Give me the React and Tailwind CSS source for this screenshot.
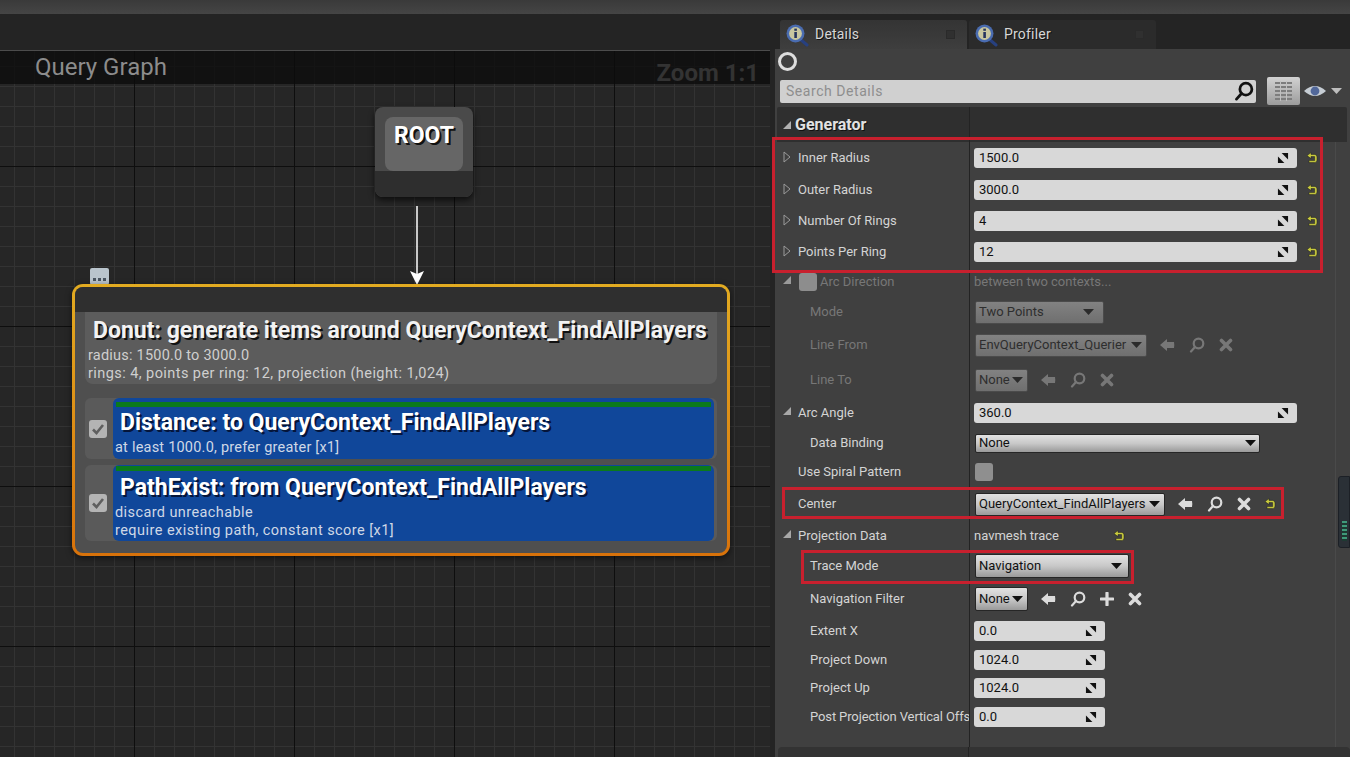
import React from 'react'

const Reset = ({ className = '' }) => (
  <svg width="12" height="13" viewBox="0 0 12 13" className={className}>
    <path d="M1 3.6 L5 0.6 V2.4 H8.5 Q11 2.4 11 5 V8 Q11 10.6 8.5 10.6 H3 V8.6 H8.6 V4.6 H5 V6.6 Z" fill="#c9cb3e" stroke="#1c1c1c" strokeWidth="0.5" />
  </svg>
)

const Spin = () => (
  <svg width="12" height="12" viewBox="0 0 13 13">
    <polygon points="5,1 12,1 12,8" fill="#111" />
    <polygon points="1,5 8,12 1,12" fill="#111" />
  </svg>
)

const ArrowLeft = ({ color }) => (
  <svg width="16" height="14" viewBox="0 0 16 14">
    <path d="M1 7 L8 1 V4 H15 Q15.6 7 15 10 H8 V13 Z" fill={color} />
  </svg>
)

const Lens = ({ color, size = 16, width = 2.2 }) => (
  <svg width={size} height={size} viewBox="0 0 16 16">
    <circle cx="9.5" cy="6.5" r="4.8" fill="none" stroke={color} strokeWidth={width} />
    <line x1="6" y1="10" x2="2" y2="14.5" stroke={color} strokeWidth={width} strokeLinecap="round" />
  </svg>
)

const Cross = ({ color }) => (
  <svg width="14" height="14" viewBox="0 0 14 14">
    <path d="M2.5 2.5 L11.5 11.5 M11.5 2.5 L2.5 11.5" stroke={color} strokeWidth="3.6" strokeLinecap="round" />
  </svg>
)

const Plus = ({ color }) => (
  <svg width="14" height="14" viewBox="0 0 14 14">
    <path d="M7 1 V13 M1 7 H13" stroke={color} strokeWidth="3.2" strokeLinecap="round" />
  </svg>
)

const TabIcon = () => (
  <svg width="24" height="24" viewBox="0 0 24 24">
    <line x1="15" y1="16" x2="22" y2="22" stroke="#27407f" strokeWidth="3" strokeLinecap="round" />
    <circle cx="10.5" cy="10.5" r="9" fill="#4a6cb0" />
    <circle cx="10.5" cy="10.5" r="6.4" fill="#c9c7a0" />
    <rect x="9.3" y="9" width="2.6" height="6" fill="#26345f" />
    <rect x="9.3" y="5.6" width="2.6" height="2.2" fill="#26345f" />
  </svg>
)

const Collapsed = () => (
  <svg width="8" height="12" viewBox="0 0 8 12">
    <path d="M1 1 L7 6 L1 11 Z" fill="none" stroke="#9a9a9a" strokeWidth="1" />
  </svg>
)

const Expanded = ({ color = '#a8a8a8' }) => (
  <svg width="10" height="10" viewBox="0 0 10 10">
    <polygon points="9,1 9,9 1,9" fill={color} />
  </svg>
)

const Check = () => (
  <div className="w-[18px] h-[18px] rounded-[3px] bg-[#b4b4b4] flex items-center justify-center shrink-0">
    <svg width="14" height="12" viewBox="0 0 14 12">
      <path d="M2 6.5 L5.5 10 L12 2" fill="none" stroke="#5f5f5f" strokeWidth="2.6" />
    </svg>
  </div>
)

const Caret = ({ color = '#111' }) => (
  <svg width="11" height="6" viewBox="0 0 11 6" className="shrink-0">
    <polygon points="0,0 11,0 5.5,6" fill={color} />
  </svg>
)

function NumberField({ value, wide }) {
  return (
    <div className={`${wide ? 'w-[323px]' : 'w-[131px]'} h-[20px] rounded-[3px] bg-[#d8d8d8] flex items-center justify-between pl-[5px] pr-[8px] text-[13px] text-[#111]`}>
      <span>{value}</span>
      <Spin />
    </div>
  )
}

function Dropdown({ label, className = '', dim }) {
  const tone = dim
    ? 'from-[#828282] to-[#6f6f6f] text-[#2e2e2e] border-[#4b4b4b]'
    : 'from-[#e2e2e2] via-[#c8c8c8] to-[#9a9a9a] text-[#111] border-[#262626]'
  return (
    <div className={`${className} bg-linear-to-b ${tone} border rounded-[2px] flex items-center justify-between pl-[3px] pr-[4px] text-[13px] whitespace-nowrap`}>
      <span>{label}</span>
      <Caret color={dim ? '#2b2b2b' : '#111'} />
    </div>
  )
}

function Row({ h, indent, arrow, label, dim, children }) {
  return (
    <div className={`${h} flex items-center`}>
      <div className={`w-[195px] h-full shrink-0 border-r border-[#232323] flex items-center overflow-hidden whitespace-nowrap text-[13px] ${dim ? 'text-[#777777]' : 'text-[#d4d4d4]'} ${indent ? 'pl-[35px]' : 'pl-[23px]'} relative`}>
        {arrow === 'closed' && <span className="absolute left-[8px] top-[calc(50%-7px)]"><Collapsed /></span>}
        {arrow === 'open' && <span className="absolute left-[7px] top-[calc(50%-7px)]"><Expanded /></span>}
        {label}
      </div>
      <div className="pl-[4px] flex items-center flex-1 min-w-0">{children}</div>
    </div>
  )
}

const Tab = ({ name, active }) => (
  <div className={`w-[187px] h-[29px] rounded-t-[3px] flex items-center pl-[5px] pr-[12px] ${active ? 'bg-linear-to-b from-[#343434] to-[#3e3e3e]' : 'bg-[#2b2b2b]'}`}>
    <TabIcon />
    <span className="ml-[6px] text-[14px] text-[#d6d6d6] [text-shadow:1px_1px_0_#111] tracking-[0.2px] flex-1">{name}</span>
    <span className="w-[9px] h-[9px] bg-[#303030] border border-[#2a2a2a]" />
  </div>
)

const Tools = ({ color, plus, className = '' }) => (
  <div className={`flex items-center gap-[14px] ${className}`}>
    <ArrowLeft color={color} />
    <Lens color={color} />
    {plus && <Plus color={color} />}
    <Cross color={color} />
  </div>
)

function TestBlock({ title, lines, className, top, gap, titleBox }) {
  return (
    <div className={`${className} flex items-center rounded-[6px] bg-[#5a5a5a]`}>
      <div className="w-[28px] flex justify-center pr-[2px] shrink-0">
        <Check />
      </div>
      <div className={`flex-1 h-full rounded-[6px] bg-[#10479a] ${top} px-[3px] mr-[3px] overflow-hidden`}>
        <div className="h-[5px] bg-[#0b7a1c]" />
        <div className={`pl-[4px] text-[23px] ${titleBox} font-bold text-white [text-shadow:2px_2px_0_#05153a] whitespace-nowrap`}>{title}</div>
        <div className={`text-[14.5px] leading-[18px] ${gap} -ml-[1px] text-[#cfd8e6]`}>
          {lines.map(l => <div key={l.text} className={l.track}>{l.text}</div>)}
        </div>
      </div>
    </div>
  )
}

function Graph() {
  return (
    <div className="relative w-[770px] border-t border-[#4c4c4c] bg-[#262626] bg-[linear-gradient(to_right,#0e0e0e_1px,transparent_1px),linear-gradient(to_bottom,#0e0e0e_1px,transparent_1px),linear-gradient(to_right,#333333_1px,transparent_1px),linear-gradient(to_bottom,#333333_1px,transparent_1px)] bg-[size:160px_160px,160px_160px,20px_20px,20px_20px] bg-[position:134px_0,0_115px,14px_0,0_15px]">
      <div className="h-[33px] bg-[#0c0c0c]/80 flex items-start justify-between pl-[35px] pr-[11px]">
        <span className="text-[24px] leading-[32px] text-[#8c8c8c]">Query Graph</span>
        <span className="text-[24px] leading-[44px] h-[33px] font-bold text-[#333333]">Zoom 1:1</span>
      </div>

      <div className="absolute left-[375px] top-[56px] w-[98px] h-[90px] rounded-[8px] bg-[#4a4a4a] shadow-[0_3px_6px_#000a] overflow-hidden">
        <div className="mx-[10px] mt-[10px] h-[54px] rounded-[8px] bg-[#666666] text-center text-[23px] leading-[38px] font-bold text-white [text-shadow:2px_2px_0_#111]">ROOT</div>
        <div className="h-[26px] bg-[#2e2e2e]" />
      </div>

      <svg width="16" height="80" viewBox="0 0 16 80" className="absolute left-[409px] top-[155px]">
        <line x1="8" y1="0" x2="8" y2="70" stroke="#ffffff" strokeWidth="1.5" />
        <polygon points="1,65 8,68 15,65 8,79" fill="#ffffff" />
      </svg>

      <div className="absolute left-[90px] top-[217px] w-[19px] h-[17px] rounded-[2px] bg-[#b9c4cc] flex items-end justify-center gap-[2px] pb-[4px]">
        <span className="w-[3px] h-[3px] bg-[#4a5560]" />
        <span className="w-[3px] h-[3px] bg-[#4a5560]" />
        <span className="w-[3px] h-[3px] bg-[#4a5560]" />
      </div>

      <div className="absolute left-[72px] top-[233px] w-[658px] h-[272px] rounded-[11px] bg-linear-to-b from-[#e2ab21] to-[#d8720a] p-[3px] shadow-[0_2px_6px_#0008]">
        <div className="h-full rounded-[8px] bg-[#4f4f4f] overflow-hidden">
          <div className="h-[25px] bg-[#2f2f2f]" />
          <div className="mx-[10px] h-[72px] rounded-b-[8px] bg-[#5c5c5c] px-[3px]">
            <div className="pl-[5px] h-[35px] text-[23px] leading-[38px] font-bold text-[#f2f2f2] [text-shadow:2px_2px_0_#111] whitespace-nowrap">Donut: generate items around QueryContext_FindAllPlayers</div>
            <div className="text-[14.5px] leading-[18px] text-[#cfcfcf] tracking-[0.22px]">radius: 1500.0 to 3000.0</div>
            <div className="text-[14.5px] leading-[18px] text-[#cfcfcf] tracking-[0.43px]">rings: 4, points per ring: 12, projection (height: 1,024)</div>
          </div>
          <div className="mx-[10px] mt-[14px] flex flex-col gap-[6px]">
            <TestBlock className="h-[61px]" top="pt-[4px]" gap="mt-0" titleBox="leading-[32px]" title="Distance: to QueryContext_FindAllPlayers" lines={[{ text: 'at least 1000.0, prefer greater [x1]', track: 'tracking-[0.22px]' }]} />
            <TestBlock className="h-[76px]" top="pt-[1px]" gap="mt-[1px]" titleBox="h-[32px] leading-[34px]" title="PathExist: from QueryContext_FindAllPlayers" lines={[{ text: 'discard unreachable', track: 'tracking-[0.4px]' }, { text: 'require existing path, constant score [x1]', track: 'tracking-[0.45px]' }]} />
          </div>
        </div>
      </div>
    </div>
  )
}

function Details() {
  const dimIcon = '#777777'
  const onIcon = '#dcdcdc'
  return (
    <div className="flex-1 flex flex-col min-w-0">
      <div className="h-[35px] flex items-end gap-[2px] pl-[5px]">
        <Tab name="Details" active />
        <Tab name="Profiler" />
      </div>
      <div className="flex-1 bg-[#404040] flex flex-col relative">
        <div className="h-[24px] pl-[3px] flex items-center">
          <span className="w-[19px] h-[19px] rounded-full border-[3px] border-[#dedede]" />
        </div>
        <div className="h-[34px] flex items-center pl-[5px] pr-[3px] pt-[2px]">
          <div className="w-[476px] h-[23px] rounded-[2px] bg-[#d0d0d0] flex items-center justify-between pl-[6px] pr-[2px] text-[14px] text-[#8e8e8e] tracking-[0.55px]">
            Search Details
            <Lens color="#111111" size={20} width={2.2} />
          </div>
          <div className="ml-[11px] w-[33px] h-[28px] rounded-[2px] bg-linear-to-b from-[#d2d2d2] to-[#9c9c9c] flex items-center justify-center">
            <svg width="17" height="20" viewBox="0 0 17 20">
              <path d="M0 2 H17 M0 6 H17 M0 10 H17 M0 14 H17 M0 18 H17" stroke="#7d7d7d" strokeWidth="2.2" />
              <path d="M5.5 0 V20 M11.5 0 V20" stroke="#c0c0c0" strokeWidth="1" />
            </svg>
          </div>
          <svg width="24" height="14" viewBox="0 0 24 14" className="ml-[3px]">
            <path d="M1 7 Q12 -3 23 7 Q12 17 1 7 Z" fill="#c6cdd4" />
            <circle cx="12" cy="7" r="4.4" fill="#52689a" />
          </svg>
          <span className="ml-[4px]"><Caret color="#bdbdbd" /></span>
        </div>

        <div className="h-[35px] bg-[#2f2f2f] ml-[2px] mr-[3px] flex items-center rounded-t-[2px]">
          <div className="w-[193px] h-full border-r border-[#232323] flex items-center pl-[5px] text-[16px] font-bold text-[#e2e2e2] [text-shadow:1px_1px_0_#111]">
            <Expanded color="#b0b0b0" />
            <span className="ml-[3px]">Generator</span>
          </div>
        </div>

        <div className="relative flex-1 mr-[14px] border-r border-[#4a4a4a]">
          <Row h="h-[32px]" arrow="closed" label="Inner Radius"><NumberField wide value="1500.0" /><Reset className="ml-[9px]" /></Row>
          <Row h="h-[32px]" arrow="closed" label="Outer Radius"><NumberField wide value="3000.0" /><Reset className="ml-[9px]" /></Row>
          <Row h="h-[30px]" arrow="closed" label="Number Of Rings"><NumberField wide value="4" /><Reset className="ml-[9px]" /></Row>
          <Row h="h-[32px]" arrow="closed" label="Points Per Ring"><NumberField wide value="12" /><Reset className="ml-[9px]" /></Row>
          <Row h="h-[28px]" dim label={
            <span className="flex items-center ml-[1px]">
              <span className="absolute left-[7px] top-[calc(50%-7px)]"><Expanded color="#9a9a9a" /></span>
              <span className="w-[18px] h-[18px] rounded-[3px] bg-[#8d8d8d] mr-[3px]" />
              Arc Direction
            </span>
          }>
            <span className="text-[13px] text-[#777777]">between two contexts...</span>
          </Row>
          <Row h="h-[32px]" dim indent label="Mode"><Dropdown dim label="Two Points" className="w-[129px] h-[23px] ml-[1px] !pr-[9px]" /></Row>
          <Row h="h-[34px]" dim indent label="Line From">
            <Dropdown dim label="EnvQueryContext_Querier" className="w-[172px] h-[23px] ml-[1px]" />
            <Tools color={dimIcon} className="ml-[12px]" />
          </Row>
          <Row h="h-[36px]" dim indent label="Line To">
            <Dropdown dim label="None" className="w-[53px] h-[23px] ml-[1px]" />
            <Tools color={dimIcon} className="ml-[12px]" />
          </Row>
          <Row h="h-[30px]" arrow="open" label="Arc Angle"><NumberField wide value="360.0" /></Row>
          <Row h="h-[30px]" indent label="Data Binding"><Dropdown label="None" className="w-[285px] h-[19px] ml-[1px] !pr-[3px]" /></Row>
          <Row h="h-[28px]" label="Use Spiral Pattern"><span className="w-[18px] h-[18px] rounded-[3px] bg-[#8f8f8f] ml-[1px]" /></Row>
          <Row h="h-[36px]" label="Center">
            <Dropdown label="QueryContext_FindAllPlayers" className="w-[190px] h-[23px] ml-[1px]" />
            <Tools color={onIcon} className="ml-[12px]" />
            <Reset className="ml-[13px]" />
          </Row>
          <Row h="h-[28px]" arrow="open" label="Projection Data">
            <span className="text-[13px] text-[#d4d4d4]">navmesh trace</span>
            <Reset className="ml-[54px]" />
          </Row>
          <Row h="h-[32px]" indent label="Trace Mode"><Dropdown label="Navigation" className="w-[154px] h-[24px] ml-[1px] !pr-[6px]" /></Row>
          <Row h="h-[34px]" indent label="Navigation Filter">
            <Dropdown label="None" className="w-[53px] h-[24px] ml-[1px]" />
            <Tools color={onIcon} plus className="ml-[12px]" />
          </Row>
          <Row h="h-[30px]" indent label="Extent X"><NumberField value="0.0" /></Row>
          <Row h="h-[28px]" indent label="Project Down"><NumberField value="1024.0" /></Row>
          <Row h="h-[28px]" indent label="Project Up"><NumberField value="1024.0" /></Row>
          <Row h="h-[30px]" indent label={<span className="tracking-[-0.12px]">Post Projection Vertical Offs</span>}><NumberField value="0.0" /></Row>
          <div className="h-[16px] w-[195px] border-r border-[#232323]" />
        </div>
        <div className="absolute left-[3px] right-0 bottom-0 h-[10px] bg-[#333333] rounded-t-[4px]">
          <div className="w-[191px] h-full border-r border-[#232323]" />
        </div>
        <div className="absolute right-0 top-[427px] w-[12px] h-[72px] rounded-l-[3px] bg-[#2a3036] border border-[#1c2026] flex items-end justify-center pb-[6px]">
          <div className="w-[5px] h-[20px] bg-[repeating-linear-gradient(to_bottom,#3f9a7a_0_2px,#1d3a32_2px_4px)]" />
        </div>
      </div>
    </div>
  )
}

export default function App() {
  return (
    <div className="relative w-[1350px] h-[757px] overflow-hidden flex flex-col bg-[#242424] font-['Roboto',sans-serif]">
      <div className="h-[14px] bg-linear-to-b from-[#3a3a3a] to-[#454545]" />
      <div className="flex-1 flex min-h-0">
        <div className="pt-[36px] flex mr-[5px]">
          <Graph />
        </div>
        <Details />
      </div>
      <div className="absolute left-[772px] top-[137px] w-[551px] h-[136px] border-[3px] border-[#c8202e] pointer-events-none" />
      <div className="absolute left-[782px] top-[487px] w-[502px] h-[32px] border-[3px] border-[#c8202e] pointer-events-none" />
      <div className="absolute left-[801px] top-[550px] w-[333px] h-[34px] border-[3px] border-[#c8202e] pointer-events-none" />
    </div>
  )
}
